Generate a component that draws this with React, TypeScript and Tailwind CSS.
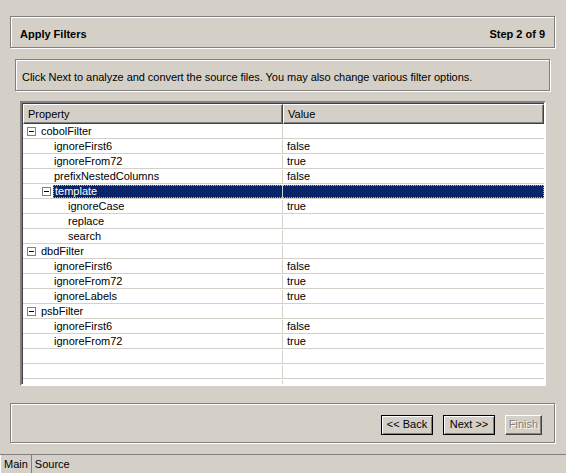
import type { ReactNode } from "react";

type Row = {
  name: string;
  value?: string;
  level: 0 | 1 | 2;
  group?: boolean;
  selected?: boolean;
};

const rows: Row[] = [
  { name: "cobolFilter", level: 0, group: true },
  { name: "ignoreFirst6", value: "false", level: 1 },
  { name: "ignoreFrom72", value: "true", level: 1 },
  { name: "prefixNestedColumns", value: "false", level: 1 },
  { name: "template", level: 1, group: true, selected: true },
  { name: "ignoreCase", value: "true", level: 2 },
  { name: "replace", level: 2 },
  { name: "search", level: 2 },
  { name: "dbdFilter", level: 0, group: true },
  { name: "ignoreFirst6", value: "false", level: 1 },
  { name: "ignoreFrom72", value: "true", level: 1 },
  { name: "ignoreLabels", value: "true", level: 1 },
  { name: "psbFilter", level: 0, group: true },
  { name: "ignoreFirst6", value: "false", level: 1 },
  { name: "ignoreFrom72", value: "true", level: 1 },
  { name: "", level: 1 },
  { name: "", level: 1 },
  { name: "", level: 1 },
];

function Etched({ className, children }: { className: string; children: ReactNode }) {
  return (
    <div
      className={`border border-[#808080] shadow-[inset_1px_1px_0_#fff,1px_1px_0_#fff] ${className}`}
    >
      {children}
    </div>
  );
}

function Minus() {
  return (
    <svg width="9" height="9" viewBox="0 0 9 9" className="shrink-0">
      <rect x="0.5" y="0.5" width="8" height="8" fill="#fff" stroke="#808080" />
      <path d="M2 4.5h5" stroke="#000" />
    </svg>
  );
}

function PropertyCell({ row }: { row: Row }) {
  if (row.group) {
    const pad = row.level === 0 ? "pl-[4px]" : "pl-[19px]";
    return (
      <div className={`flex h-full items-center ${pad}`}>
        <Minus />
        {row.selected ? (
          <span className="ml-[2px] flex h-full flex-1 items-center border-y border-l border-dotted border-[#c8b878] bg-[#0a246a] pl-[1px] text-white">
            {row.name}
          </span>
        ) : (
          <span className="ml-[5px]">{row.name}</span>
        )}
      </div>
    );
  }
  const pad = row.level === 2 ? "pl-[45px]" : "pl-[31px]";
  return <div className={`flex h-full items-center ${pad}`}>{row.name}</div>;
}

function WizButton({ label, isDefault, disabled }: { label: string; isDefault?: boolean; disabled?: boolean }) {
  if (disabled) {
    return (
      <div className="flex h-[20px] w-[37px] items-center justify-center border border-t-white border-l-white border-r-[#404040] border-b-[#404040] shadow-[inset_-1px_-1px_0_#808080] text-[#808080] [text-shadow:1px_1px_0_#fff]">
        {label}
      </div>
    );
  }
  return (
    <div className={`h-[20px] w-[52px] border ${isDefault ? "border-black" : "border-transparent"}`}>
      <div className="flex h-full items-center justify-center shadow-[inset_1px_1px_0_#fff,inset_-1px_-1px_0_#808080]">
        {label}
      </div>
    </div>
  );
}

export default function App() {
  return (
    <div className="flex h-[473px] w-[566px] flex-col overflow-hidden bg-[#d4d0c8] font-['Liberation_Sans',Arial,sans-serif] text-[11px] leading-none text-black">
      <Etched className="mx-[10px] mt-[16px] flex h-[32px] w-[545px] items-center justify-between px-[9px] pt-[5px] font-bold">
        <span>Apply Filters</span>
        <span>Step 2 of 9</span>
      </Etched>

      <Etched className="ml-[15px] mt-[11px] flex h-[32px] w-[535px] items-center pl-[6px] pt-[4px] tracking-[-0.05px]">
        Click Next to analyze and convert the source files. You may also change various filter options.
      </Etched>

      <div className="ml-[20px] mt-[10px] h-[285px] w-[526px] border-2 border-t-[#808080] border-l-[#808080] border-r-white border-b-white">
        <div className="h-full overflow-hidden border-t border-l border-t-[#404040] border-l-[#404040] bg-white">
          <div className="grid h-[20px] grid-cols-[260px_1fr] bg-[#d4d0c8]">
            <div className="flex items-center border border-t-white border-l-white border-r-[#404040] border-b-[#404040] pl-[4px] pt-[1px] shadow-[inset_-1px_-1px_0_#808080]">
              Property
            </div>
            <div className="flex items-center border border-t-white border-l-white border-r-[#404040] border-b-[#404040] pl-[4px] pt-[1px] shadow-[inset_-1px_-1px_0_#808080]">
              Value
            </div>
          </div>
          {rows.map((row, i) => (
            <div key={i} className="grid h-[15px] grid-cols-[260px_1fr] border-b border-[#d4d0c8] pt-[1px]">
              <div className="h-full border-r border-[#d4d0c8]">
                <PropertyCell row={row} />
              </div>
              {row.selected ? (
                <div className="h-full border-y border-r border-dotted border-[#c8b878] bg-[#0a246a]" />
              ) : (
                <div className="flex h-full items-center pl-[4px]">{row.value}</div>
              )}
            </div>
          ))}
        </div>
      </div>

      <Etched className="ml-[10px] mt-[17px] flex h-[40px] w-[545px] items-center justify-end gap-[10px] pr-[12px] pt-[3px]">
        <WizButton label="<< Back" isDefault />
        <WizButton label="Next >>" isDefault />
        <WizButton label="Finish" disabled />
      </Etched>

      <div className="mt-[11px] flex flex-1 border-t border-[#808080]">
        <div className="flex items-center border-x border-l-white border-r-[#808080] px-[3px] pt-[1px]">Main</div>
        <div className="flex items-center px-[3px] pt-[1px]">Source</div>
      </div>
    </div>
  );
}
